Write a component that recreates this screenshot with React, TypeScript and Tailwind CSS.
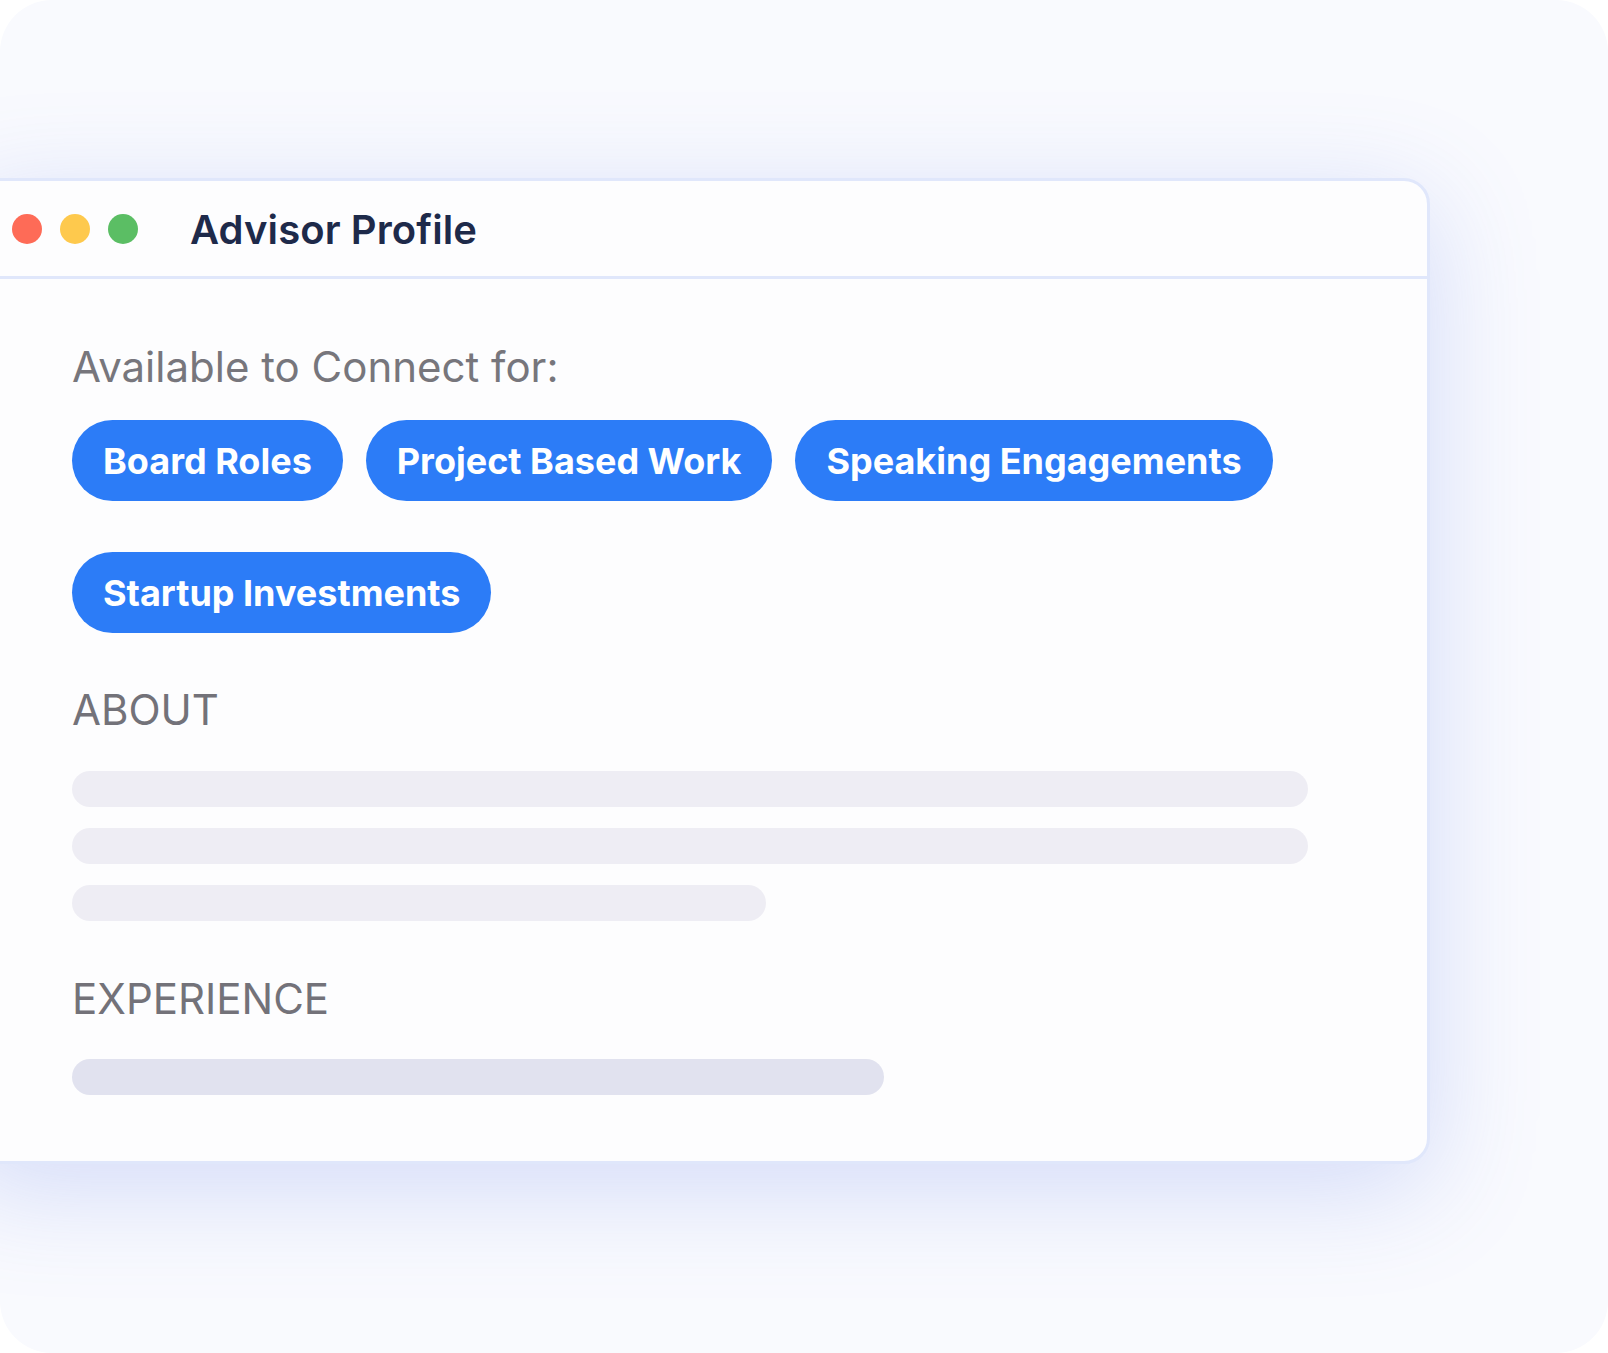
import React from "react";

const pillsRow1 = ["Board Roles", "Project Based Work", "Speaking Engagements"];

function Pill({ label }: { label: string }) {
  return (
    <div className="h-[81px] px-[31px] rounded-full bg-[#2c7cf7] flex items-center text-white font-bold text-[36px] leading-none whitespace-nowrap">
      {label}
    </div>
  );
}

export default function App() {
  return (
    <div className="w-[1608px] h-[1353px] bg-white overflow-hidden" style={{ fontFamily: "Inter, 'Noto Sans', sans-serif" }}>
      <div className="w-full h-full rounded-[52px] bg-[#f9fafe] pt-[178px] overflow-hidden">
        <div className="ml-[-40px] w-[1470px] h-[986px] rounded-[26px] border-[3px] border-[#e0e7fb] bg-[#fdfdfe] shadow-[0_24px_110px_rgba(90,120,230,0.24)] flex flex-col">
          <div className="h-[98px] shrink-0 border-b-[3px] border-[#e0e7fb] flex items-center pl-[49px]">
            <div className="flex items-center gap-[18px]">
              <span className="w-[30px] h-[30px] rounded-full bg-[#fe6b57]" />
              <span className="w-[30px] h-[30px] rounded-full bg-[#fec94d]" />
              <span className="w-[30px] h-[30px] rounded-full bg-[#5bbe64]" />
            </div>
            <div className="ml-[52px] mt-[2px] text-[40px] leading-none font-semibold text-[#1e2a4a] tracking-[0.1px]">
              Advisor Profile
            </div>
          </div>
          <div className="pl-[109px] pt-[67px] flex flex-col">
            <div className="text-[42px] leading-none text-[#77767c]">Available to Connect for:</div>
            <div className="mt-[32px] flex flex-wrap gap-x-[23px] gap-y-[51px]">
              {pillsRow1.map((p) => (
                <Pill key={p} label={p} />
              ))}
              <Pill label="Startup Investments" />
            </div>
            <div className="mt-[56px] text-[42px] leading-none text-[#737279]">ABOUT</div>
            <div className="mt-[40px] flex flex-col gap-[21px]">
              <div className="h-[36px] w-[1236px] rounded-full bg-[#eeedf4]" />
              <div className="h-[36px] w-[1236px] rounded-full bg-[#eeedf4]" />
              <div className="h-[36px] w-[694px] rounded-full bg-[#eeedf4]" />
            </div>
            <div className="mt-[57px] text-[42px] leading-none text-[#737279]">EXPERIENCE</div>
            <div className="mt-[39px] h-[36px] w-[812px] rounded-full bg-[#e1e2ef]" />
          </div>
        </div>
      </div>
    </div>
  );
}
